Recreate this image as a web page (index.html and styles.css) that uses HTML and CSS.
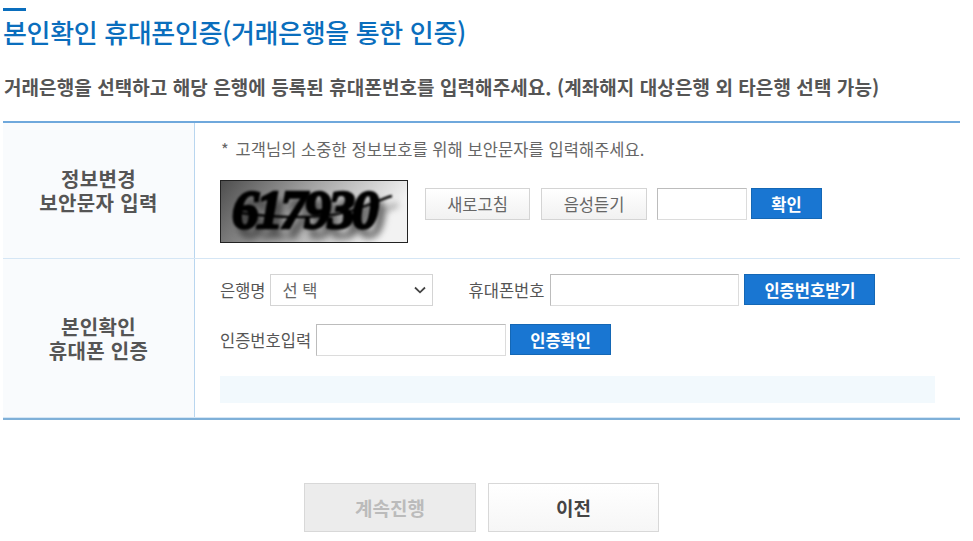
FILE: index.html
```html
<!DOCTYPE html>
<html lang="ko">
<head>
    <meta charset="UTF-8">
    <meta name="viewport" content="width=device-width, initial-scale=1.0">
    <title>본인확인 휴대폰인증</title>
    <link rel="stylesheet" href="styles.css">
</head>
<body>
    <div class="page">
        <h2 class="title">본인확인 휴대폰인증(거래은행을 통한 인증)</h2>
        <p class="subtitle">거래은행을 선택하고 해당 은행에 등록된 휴대폰번호를 입력해주세요. (계좌해지 대상은행 외 타은행 선택 가능)</p>

        <div class="form-box">
            <div class="row row-captcha">
                <div class="row-head">정보변경<br>보안문자 입력</div>
                <div class="row-body">
                    <p class="note"><span class="star">*</span> 고객님의 소중한 정보보호를 위해 보안문자를 입력해주세요.</p>
                    <div class="captcha-line">
                        <svg class="captcha" width="186" height="61" viewBox="0 0 186 61">
                            <defs>
                                <linearGradient id="captcha-bg" x1="0" y1="0" x2="1" y2="0.25">
                                    <stop offset="0" stop-color="#4e4e4e"/>
                                    <stop offset="0.5" stop-color="#a6a6a6"/>
                                    <stop offset="1" stop-color="#f2f2f2"/>
                                </linearGradient>
                            </defs>
                            <rect width="186" height="61" fill="url(#captcha-bg)"/>
                            <g class="captcha-ink">
                                <text x="11" y="47">617930</text>
                                <path d="M20 32C60 38 110 38 135 28C150 24 160 18 171 15" fill="none" stroke="#000" stroke-width="2.4"/>
                            </g>
                        </svg>
                        <button class="btn-light btn-refresh">새로고침</button>
                        <button class="btn-light btn-voice">음성듣기</button>
                        <input class="text-input input-captcha" type="text">
                        <button class="btn-blue btn-ok">확인</button>
                    </div>
                </div>
            </div>
            <div class="row row-phone">
                <div class="row-head">본인확인<br>휴대폰 인증</div>
                <div class="row-body">
                    <div class="field-line">
                        <label class="field-label">은행명</label>
                        <div class="select-box">
                            <span>선 택</span>
                            <svg width="12" height="8" viewBox="0 0 12 8"><path d="M1 1.5L6 6.3L11 1.5" fill="none" stroke="#444" stroke-width="1.8"/></svg>
                        </div>
                        <label class="field-label label-phone">휴대폰번호</label>
                        <input class="text-input input-phone" type="text">
                        <button class="btn-blue btn-request">인증번호받기</button>
                    </div>
                    <div class="field-line line-code">
                        <label class="field-label">인증번호입력</label>
                        <input class="text-input input-code" type="text">
                        <button class="btn-blue btn-check">인증확인</button>
                    </div>
                    <div class="message-box"></div>
                </div>
            </div>
        </div>

        <div class="actions">
            <button class="btn-next" disabled>계속진행</button>
            <button class="btn-prev">이전</button>
        </div>
    </div>
</body>
</html>
```

FILE: styles.css
```css
body {
    font-family: "Noto Sans CJK KR", "Noto Sans", sans-serif;
    margin: 0;
    padding: 0;
    background: #fff;
    color: #555;
}

.page {
    width: 957px;
    margin-left: 3px;
    padding-top: 8px;
}

.title {
    margin: 0;
    font-size: 26px;
    font-weight: 500;
    line-height: 36px;
    color: #0a6ebd;
    padding-top: 6px;
    position: relative;
    letter-spacing: -0.35px;
}

    .title::before {
        content: "";
        position: absolute;
        top: 0;
        left: 0;
        width: 23px;
        height: 3px;
        background: #0a6ebd;
    }

.subtitle {
    margin: 23px 0 0;
    padding-left: 1px;
    font-size: 19px;
    font-weight: 700;
    line-height: 28px;
    color: #555;
    letter-spacing: 0.07px;
}

.form-box {
    margin-top: 20px;
    border-top: 2px solid #6fa8dc;
    border-bottom: 2px solid #7fb0d8;
}

.row {
    display: flex;
}

.row-captcha {
    height: 135px;
    border-bottom: 1px solid #d5e6f5;
}

.row-phone {
    height: 158px;
    border-bottom: 1px solid #d5e6f5;
}

.row-head {
    width: 191px;
    flex: none;
    display: flex;
    align-items: center;
    justify-content: center;
    text-align: center;
    background: #f9fbfd;
    border-right: 1px solid #b9d6ef;
    font-size: 20px;
    font-weight: 700;
    line-height: 24px;
    letter-spacing: 0.35px;
}

.row-phone .row-head {
    padding-top: 2px;
}

.row-body {
    flex: 1;
    padding-left: 25px;
}

.note {
    margin: 0;
    padding-top: 15px;
    font-size: 16.5px;
    line-height: 22px;
    color: #666;
    letter-spacing: 0.06px;
}

.star {
    margin-right: 2px;
    padding-left: 1px;
    color: #666;
}

.captcha-line {
    display: flex;
    align-items: flex-start;
    margin-top: 20px;
}

.captcha {
    display: block;
    flex: none;
    box-sizing: content-box;
    border: 1px solid #222;
}

    .captcha text {
        font-family: "Liberation Serif", serif;
        font-size: 54px;
        font-weight: 700;
        font-style: italic;
        letter-spacing: -3px;
        stroke: #000;
        stroke-width: 2.6;
    }

.captcha-ink {
    filter: blur(0.8px) drop-shadow(6px 9px 3px rgba(40, 40, 40, 0.65));
}

.btn-light {
    height: 32px;
    margin-top: 8px;
    margin-left: 17px;
    padding: 0;
    font-family: inherit;
    font-size: 16.5px;
    color: #666;
    background: linear-gradient(#fff, #f1f1f1);
    border: 1px solid #d4d4d4;
}

.btn-refresh {
    width: 105px;
}

.btn-voice {
    width: 106px;
    margin-left: 11px;
}

.text-input {
    box-sizing: border-box;
    height: 32px;
    padding: 0 6px;
    background: #fff;
    border: 1px solid #dcdcdc;
    border-top-color: #bcbcbc;
    border-left-color: #bcbcbc;
}

.input-captcha {
    width: 90px;
    margin-top: 8px;
    margin-left: 10px;
}

.btn-blue {
    height: 31px;
    padding: 0;
    font-family: inherit;
    font-size: 16.5px;
    font-weight: 700;
    color: #fff;
    background: #1976d2;
    border: 1px solid #1467b5;
}

.btn-ok {
    width: 71px;
    margin-top: 8px;
    margin-left: 4px;
}

.field-line {
    display: flex;
    align-items: flex-start;
    height: 32px;
    padding-top: 15px;
}

.line-code {
    padding-top: 19px;
    margin-top: -1px;
}

.field-label {
    align-self: center;
    font-size: 16.5px;
    color: #555;
}

.select-box {
    box-sizing: border-box;
    display: flex;
    align-items: center;
    justify-content: space-between;
    width: 163px;
    height: 32px;
    margin-left: 4px;
    padding: 0 6px 0 12px;
    font-size: 16.5px;
    color: #666;
    border: 1px solid #d4d4d4;
}

.label-phone {
    margin-left: 36px;
}

.input-phone {
    width: 189px;
    margin-left: 6px;
}

.btn-request {
    width: 131px;
    margin-left: 5px;
}

.input-code {
    width: 190px;
    margin-left: 5px;
}

.btn-check {
    width: 101px;
    margin-left: 4px;
}

.message-box {
    width: 715px;
    height: 27px;
    margin-top: 20px;
    background: #f2f9fd;
}

.actions {
    display: flex;
    justify-content: center;
    gap: 12px;
    margin-top: 63px;
}

.actions button {
    box-sizing: border-box;
    width: 172px;
    height: 49px;
    padding: 0;
    font-family: inherit;
    font-size: 19px;
    font-weight: 700;
    border: 1px solid #d8d8d8;
}

.btn-next {
    color: #bbb;
    background: #ececec;
}

.actions .btn-prev {
    width: 171px;
    color: #444;
    background: linear-gradient(#fff, #f6f6f6);
}
```
